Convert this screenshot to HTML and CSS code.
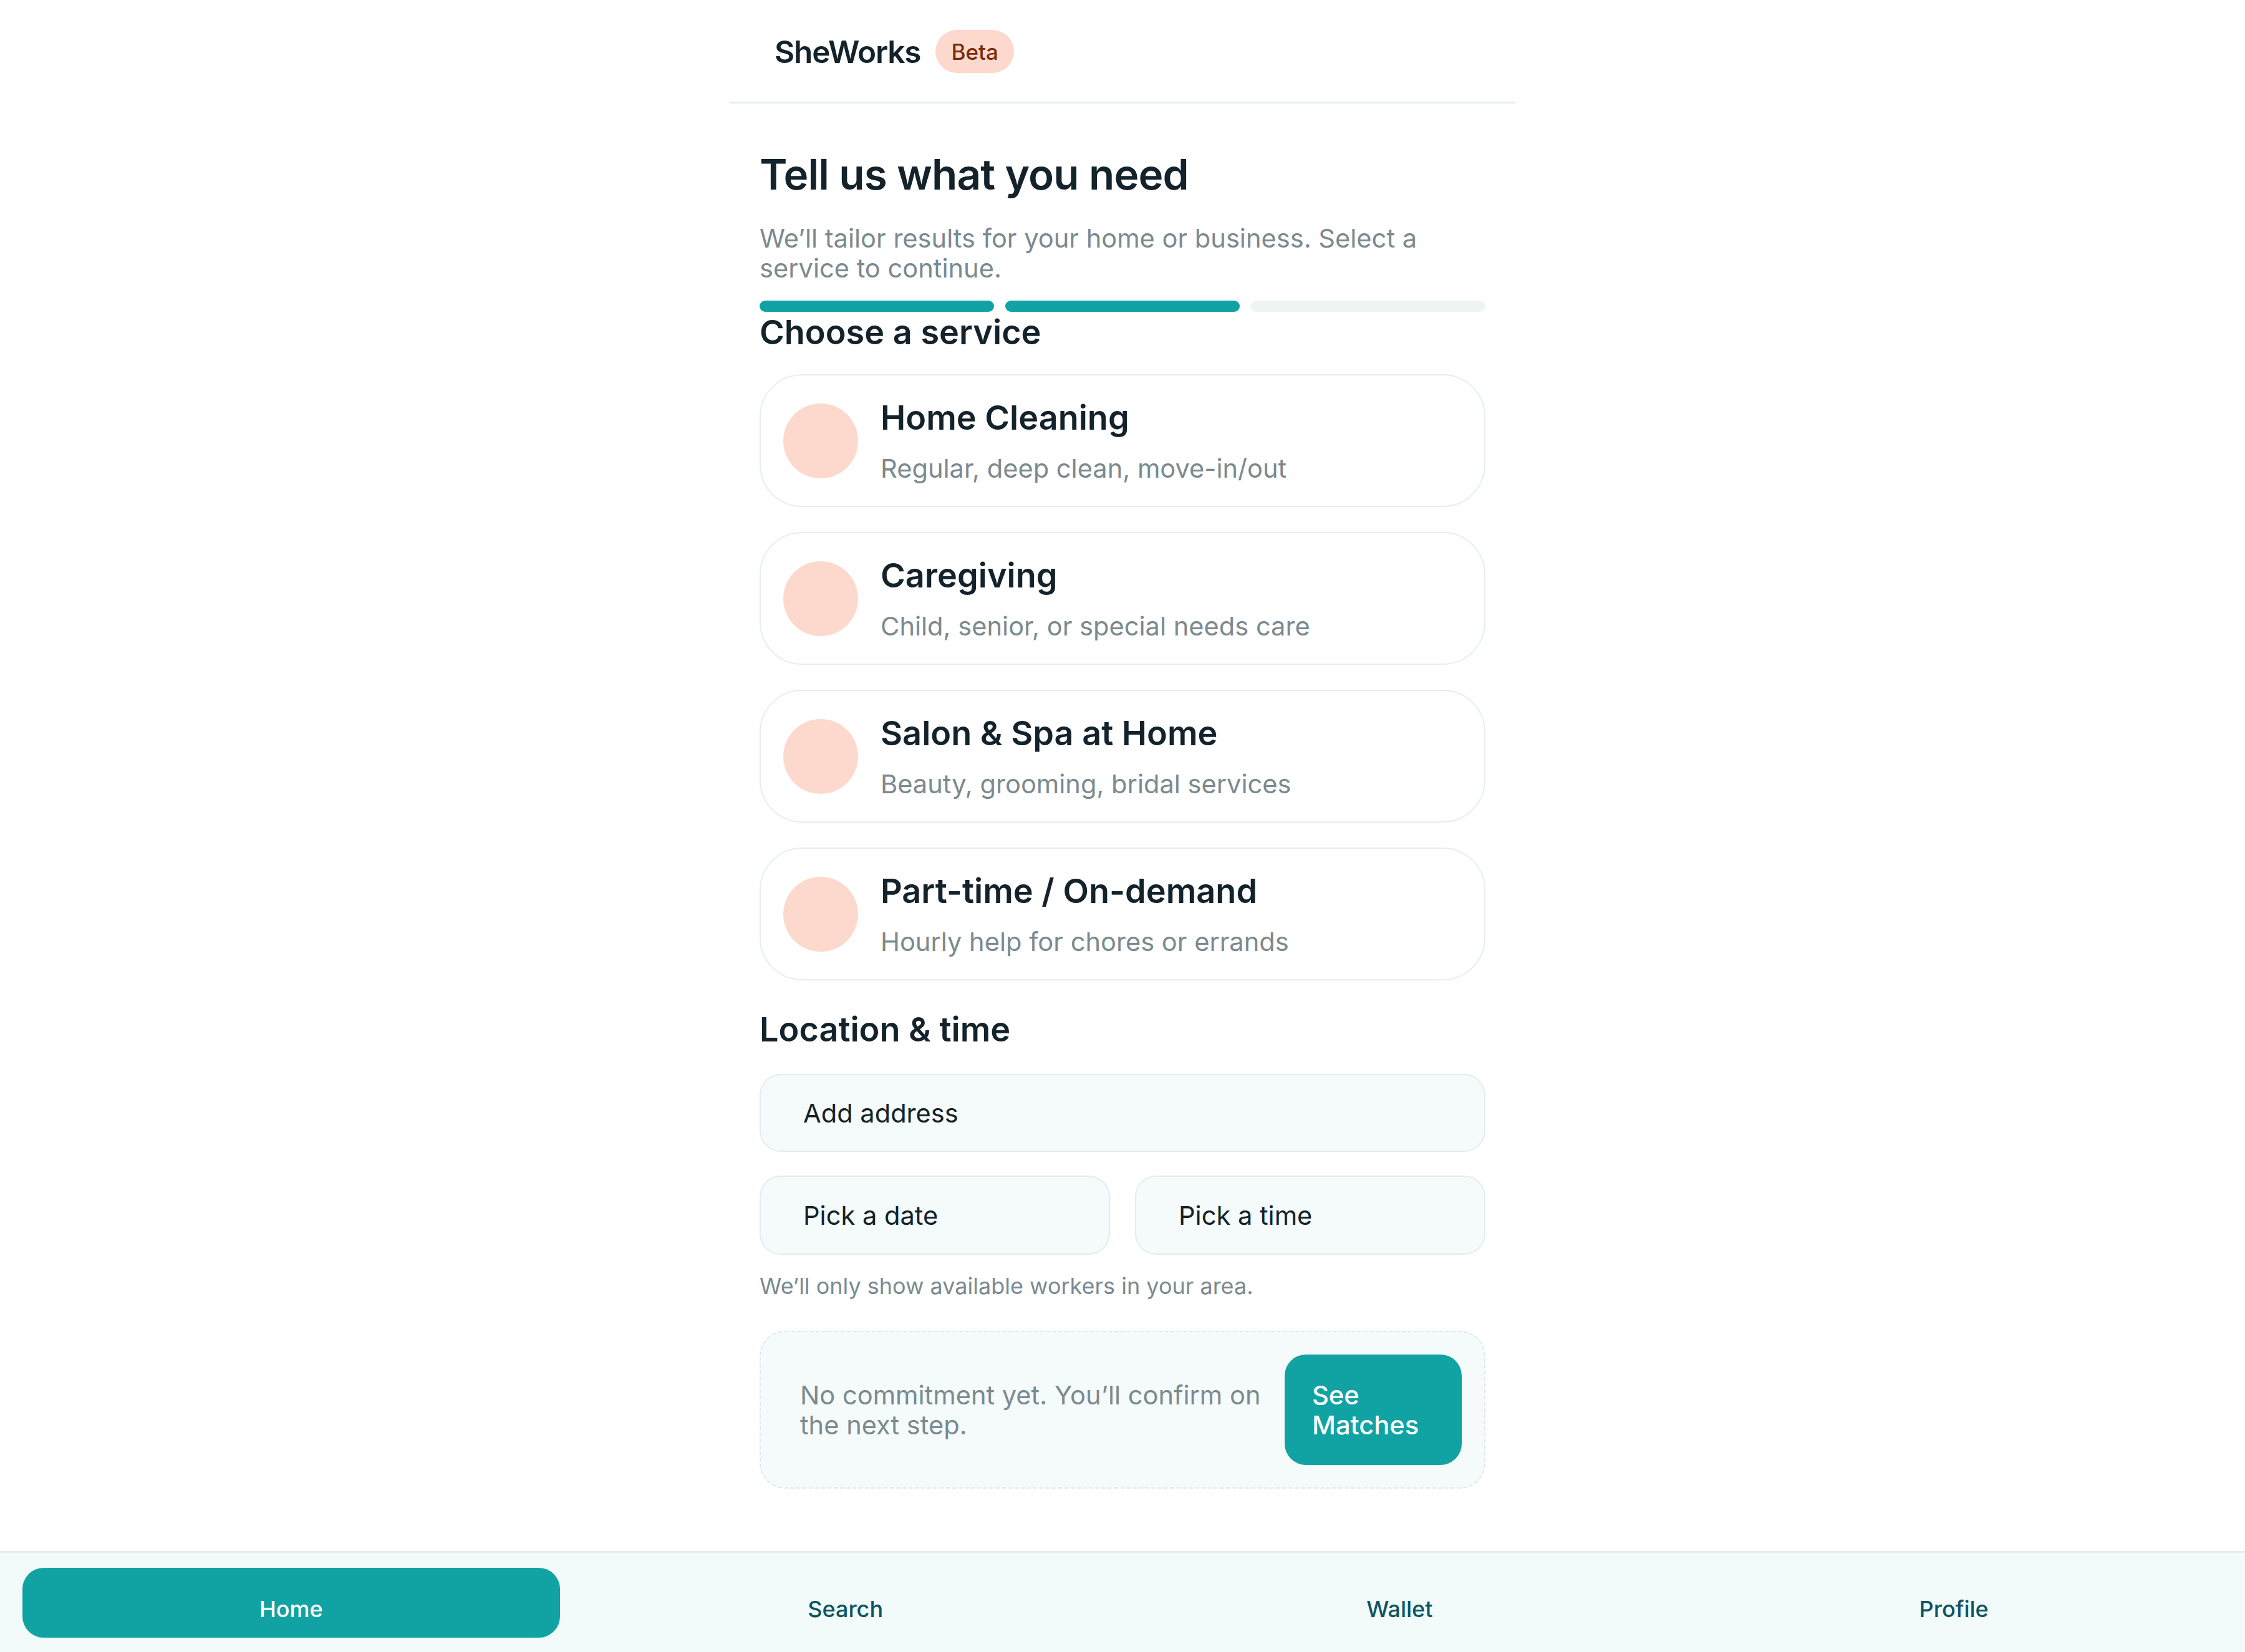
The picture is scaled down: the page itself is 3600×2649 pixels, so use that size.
FILE: index.html
```html
<!DOCTYPE html>
<html lang="en">
<head>
<meta charset="utf-8">
<title>SheWorks</title>
<link rel="stylesheet" href="styles.css">
</head>
<body>
<div class="page">
  <div class="shell">
    <header class="topbar">
      <span class="brand">SheWorks</span>
      <span class="badge">Beta</span>
    </header>
    <main class="content">
      <h1 class="title">Tell us what you need</h1>
      <p class="subtitle">We’ll tailor results for your home or business. Select a service to continue.</p>
      <div class="progress">
        <span class="step done"></span>
        <span class="step done"></span>
        <span class="step"></span>
      </div>
      <h2 class="section-title">Choose a service</h2>
      <div class="services">
        <div class="service">
          <span class="dot"></span>
          <div class="service-text">
            <div class="service-name">Home Cleaning</div>
            <div class="service-desc">Regular, deep clean, move-in/out</div>
          </div>
        </div>
        <div class="service">
          <span class="dot"></span>
          <div class="service-text">
            <div class="service-name">Caregiving</div>
            <div class="service-desc">Child, senior, or special needs care</div>
          </div>
        </div>
        <div class="service">
          <span class="dot"></span>
          <div class="service-text">
            <div class="service-name">Salon &amp; Spa at Home</div>
            <div class="service-desc">Beauty, grooming, bridal services</div>
          </div>
        </div>
        <div class="service">
          <span class="dot"></span>
          <div class="service-text">
            <div class="service-name">Part-time / On-demand</div>
            <div class="service-desc">Hourly help for chores or errands</div>
          </div>
        </div>
      </div>
      <h2 class="section-title loc">Location &amp; time</h2>
      <div class="field wide">Add address</div>
      <div class="field-row">
        <div class="field">Pick a date</div>
        <div class="field">Pick a time</div>
      </div>
      <p class="hint">We’ll only show available workers in your area.</p>
      <div class="cta">
        <p class="cta-text">No commitment yet. You’ll confirm on the next step.</p>
        <button class="cta-btn">See Matches</button>
      </div>
    </main>
  </div>
  <nav class="tabbar">
    <span class="tab active">Home</span>
    <span class="tab">Search</span>
    <span class="tab">Wallet</span>
    <span class="tab">Profile</span>
  </nav>
</div>
</body>
</html>
```
FILE: styles.css
```css
* { box-sizing: border-box; }
html, body { margin: 0; padding: 0; background: #ffffff; }
body {
  font-family: Inter, "Noto Sans", "Liberation Sans", sans-serif;
  color: #13222b;
}
.page {
  min-height: 100vh;
  display: flex;
  flex-direction: column;
}
.shell {
  width: 1260px;
  margin: 0 auto;
}
.topbar {
  display: flex;
  align-items: center;
  gap: 24px;
  padding: 48px 72px 46px;
  border-bottom: 3px solid #e6eef0;
}
.brand {
  font-size: 49.5px;
  font-weight: 600;
  line-height: 60px;
  letter-spacing: -1.1px;
  color: #13222b;
}
.badge {
  display: inline-flex;
  align-items: center;
  height: 69px;
  padding: 0 25px;
  border-radius: 40px;
  background: #fdd9cd;
  color: #7c2c0c;
  font-size: 35px;
  font-weight: 500;
}
.content {
  padding: 73px 48px 0;
}
.title {
  margin: 0;
  font-size: 67.5px;
  font-weight: 600;
  line-height: 82px;
  letter-spacing: -0.85px;
  color: #13222b;
}
.subtitle {
  margin: 37px 0 0;
  font-size: 41.6px;
  line-height: 48px;
  color: #7b8a8f;
}
.progress {
  display: grid;
  grid-template-columns: 1fr 1fr 1fr;
  gap: 18px;
  margin-top: 28px;
}
.step {
  height: 18px;
  border-radius: 9px;
  background: #eef3f4;
}
.step.done { background: #11a3a4; }
.section-title {
  margin: 0;
  font-size: 54px;
  font-weight: 600;
  line-height: 65px;
  color: #13222b;
}
.section-title.loc { margin-top: 46px; }
.services {
  display: flex;
  flex-direction: column;
  gap: 40px;
  margin-top: 35px;
}
.service {
  display: flex;
  align-items: center;
  gap: 36px;
  height: 213px;
  padding: 0 36px;
  border: 2px solid #e5eef0;
  border-radius: 68px;
  background: #ffffff;
}
.dot {
  flex: none;
  width: 120px;
  height: 120px;
  border-radius: 50%;
  background: #fdd9cd;
}
.service-text {
  display: flex;
  flex-direction: column;
  gap: 24px;
}
.service-name {
  font-size: 54px;
  font-weight: 600;
  line-height: 65px;
  color: #13222b;
}
.service-desc {
  font-size: 41.6px;
  line-height: 50px;
  color: #7b8a8f;
}
.field {
  display: flex;
  align-items: center;
  height: 125px;
  padding: 0 68px;
  border: 2px solid #e3ecee;
  border-radius: 34px;
  background: #f5fafa;
  font-size: 41.6px;
  color: #13222b;
}
.field.wide { margin-top: 39px; }
.field-row {
  display: grid;
  grid-template-columns: 1fr 1fr;
  gap: 40px;
  margin-top: 38px;
}
.field-row .field { height: 127px; }
.hint {
  margin: 28px 0 0;
  font-size: 36px;
  line-height: 44px;
  color: #7b8a8f;
}
.cta {
  display: flex;
  align-items: center;
  gap: 36px;
  margin-top: 50px;
  height: 253px;
  padding: 0 36px 0 63px;
  border: 2px dashed #dfe9eb;
  border-radius: 40px;
  background: #f5fafb;
}
.cta-text {
  flex: 1;
  margin: 0;
  font-size: 41.6px;
  line-height: 48px;
  color: #7b8a8f;
}
.cta-btn {
  flex: none;
  width: 284px;
  height: 177px;
  padding: 0 40px 0 44px;
  border: none;
  border-radius: 34px;
  background: #11a3a4;
  color: #ffffff;
  font-family: inherit;
  font-size: 41.6px;
  font-weight: 500;
  line-height: 48px;
  text-align: left;
}
.tabbar {
  margin-top: auto;
  display: grid;
  grid-template-columns: repeat(4, 1fr);
  gap: 27px;
  padding: 24px 36px 23px;
  border-top: 3px solid #e4eef0;
  background: #f2fafa;
}
.tab {
  display: block;
  text-align: center;
  padding: 44px 0 24px;
  border-radius: 34px;
  font-size: 36px;
  font-weight: 500;
  line-height: 44px;
  color: #0e5560;
}
.tab.active {
  background: #11a3a4;
  color: #ffffff;
}
```
